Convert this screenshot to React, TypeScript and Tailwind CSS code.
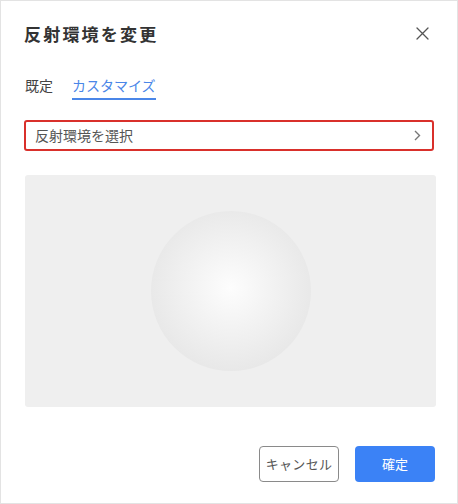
import React from "react";

export default function App() {
  return (
    <div
      className="w-[458px] h-[504px] bg-white border border-[#e3e3e3] flex flex-col text-[#333]"
      style={{ fontFamily: '"Noto Sans CJK JP", "Noto Sans", sans-serif' }}
    >
      <div className="flex items-center justify-between pl-[23px] pr-[28px] pt-[17px] h-[48px]">
        <h1 className="text-[17px] font-bold tracking-[2.2px] text-[#333] leading-none">反射環境を変更</h1>
        <svg width="13" height="13" viewBox="0 0 13 13" className="mt-[0px]">
          <path d="M1 1L12 12M12 1L1 12" stroke="#555" strokeWidth="1.3" strokeLinecap="round" />
        </svg>
      </div>
      <div className="flex gap-[19px] pl-[24px] mt-[26px]">
        <div className="text-[14px] leading-[20px] text-[#444] pb-[5px]">既定</div>
        <div className="text-[14px] leading-[20px] text-[#4a86e8] pb-[3px] border-b-2 border-[#4a86e8]">カスタマイズ</div>
      </div>
      <div className="mx-[23px] mt-[20px] h-[31px] border-2 border-[#d9302b] rounded-[3px] flex items-center justify-between pl-[9px] pr-[11px]">
        <span className="text-[14px] text-[#555]">反射環境を選択</span>
        <svg width="7" height="11" viewBox="0 0 7 11">
          <path d="M1 1L5.5 5.5L1 10" stroke="#777" strokeWidth="1.4" fill="none" />
        </svg>
      </div>
      <div className="ml-[24px] mr-[21px] mt-[24px] h-[232px] bg-[#efefef] rounded-[3px] flex items-center justify-center">
        <div
          className="w-[160px] h-[160px] rounded-full"
          style={{
            background:
              "radial-gradient(circle at 50% 48%, #fdfdfd 0%, #f4f4f4 30%, #e9e9e9 68%, #e0e0e0 100%)",
          }}
        />
      </div>
      <div className="flex justify-end gap-[16px] pr-[22px] mt-[39px]">
        <button className="w-[80px] h-[36px] border border-[#8a8a8a] rounded-[4px] text-[13px] text-[#555] bg-white tracking-[0.3px]">
          キャンセル
        </button>
        <button className="w-[80px] h-[36px] rounded-[4px] text-[13px] text-white bg-[#3b82f6]">
          確定
        </button>
      </div>
    </div>
  );
}
